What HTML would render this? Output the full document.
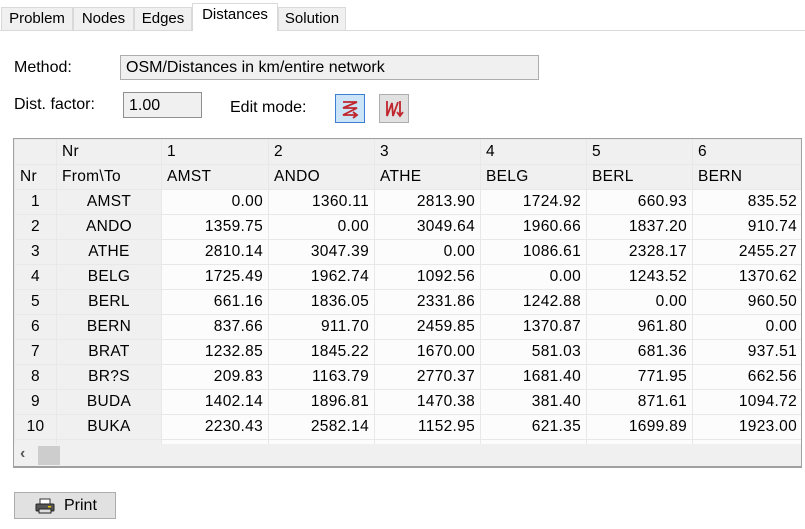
<!DOCTYPE html>
<html><head><style>
body{margin:0;width:805px;height:529px;background:#fff;font-family:"Liberation Sans",sans-serif;font-size:16px;color:#000;position:relative;overflow:hidden}
.abs{position:absolute}
.tab{position:absolute;top:7px;height:23px;background:#f0f0f0;border:1px solid #d9d9d9;border-bottom:none;line-height:22px;text-align:center;box-sizing:border-box;font-size:15px}
table{border-collapse:collapse;table-layout:fixed}
td{height:25px;border:1px solid #e8e8e8;padding:0 5px;box-sizing:border-box;white-space:nowrap;overflow:hidden;font-size:15.5px;letter-spacing:0.3px}
td.g{background:#f0f0f0}
td.c{text-align:center}
td.n{text-align:right;background:#fcfcfc}
</style></head><body>
<div class="abs" style="left:0;top:30px;width:805px;border-top:1px solid #d9d9d9"></div>
<div class="tab" style="left:1px;width:72px">Problem</div>
<div class="tab" style="left:73px;width:61px">Nodes</div>
<div class="tab" style="left:134px;width:58px">Edges</div>
<div class="tab" style="left:192px;top:3px;height:28px;width:86px;background:#fff;border-color:#d9d9d9">Distances</div>
<div class="tab" style="left:278px;width:68px">Solution</div>

<div class="abs" style="left:14px;top:59px">Method:</div>
<div class="abs" style="left:120px;top:55px;width:419px;height:25px;box-sizing:border-box;border:1px solid #adadad;background:#f0f0f0;padding:3px 5px">OSM/Distances in km/entire network</div>
<div class="abs" style="left:14px;top:96px">Dist. factor:</div>
<div class="abs" style="left:123px;top:92px;width:79px;height:26px;box-sizing:border-box;border:1px solid #8f8f8f;background:#f0f0f0;padding:4px 5px">1.00</div>
<div class="abs" style="left:230px;top:99px">Edit mode:</div>
<div class="abs" style="left:335px;top:94px;width:30px;height:29px;box-sizing:border-box;border:1px solid #3c7fd0;background:#cce4f7">
<svg width="28" height="27" viewBox="0 0 28 27"><path d="M7 7H21L7 13H21L7 20H20M17 17L21 20L17 23" fill="none" stroke="#c0262c" stroke-width="1.8"/></svg></div>
<div class="abs" style="left:379px;top:94px;width:30px;height:29px;box-sizing:border-box;border:1px solid #adadad;background:#e1e1e1">
<svg width="28" height="27" viewBox="0 0 28 27"><path d="M7 6L7 21L12 8L13 21L18 7M20 6V21M17 17L20 21L23 17" fill="none" stroke="#c0262c" stroke-width="1.8"/></svg></div>

<div class="abs" style="left:13px;top:138px;width:789px;height:330px;box-sizing:border-box;border:1px solid #a0a0a0;border-bottom:2px solid #a0a0a0;background:#f0f0f0;overflow:hidden">
<table style="position:absolute;left:0;top:0;width:788px">
<colgroup><col style="width:42px"><col style="width:105px"><col style="width:107px"><col style="width:106px"><col style="width:106px"><col style="width:106px"><col style="width:106px"><col style="width:110px"></colgroup>
<tr><td class="g"></td><td class="g">Nr</td><td class="g">1</td><td class="g">2</td><td class="g">3</td><td class="g">4</td><td class="g">5</td><td class="g">6</td></tr>
<tr><td class="g">Nr</td><td class="g">From\To</td><td class="g">AMST</td><td class="g">ANDO</td><td class="g">ATHE</td><td class="g">BELG</td><td class="g">BERL</td><td class="g">BERN</td></tr>
<tr><td class="g c">1</td><td class="g c">AMST</td><td class="n">0.00</td><td class="n">1360.11</td><td class="n">2813.90</td><td class="n">1724.92</td><td class="n">660.93</td><td class="n">835.52</td></tr>
<tr><td class="g c">2</td><td class="g c">ANDO</td><td class="n">1359.75</td><td class="n">0.00</td><td class="n">3049.64</td><td class="n">1960.66</td><td class="n">1837.20</td><td class="n">910.74</td></tr>
<tr><td class="g c">3</td><td class="g c">ATHE</td><td class="n">2810.14</td><td class="n">3047.39</td><td class="n">0.00</td><td class="n">1086.61</td><td class="n">2328.17</td><td class="n">2455.27</td></tr>
<tr><td class="g c">4</td><td class="g c">BELG</td><td class="n">1725.49</td><td class="n">1962.74</td><td class="n">1092.56</td><td class="n">0.00</td><td class="n">1243.52</td><td class="n">1370.62</td></tr>
<tr><td class="g c">5</td><td class="g c">BERL</td><td class="n">661.16</td><td class="n">1836.05</td><td class="n">2331.86</td><td class="n">1242.88</td><td class="n">0.00</td><td class="n">960.50</td></tr>
<tr><td class="g c">6</td><td class="g c">BERN</td><td class="n">837.66</td><td class="n">911.70</td><td class="n">2459.85</td><td class="n">1370.87</td><td class="n">961.80</td><td class="n">0.00</td></tr>
<tr><td class="g c">7</td><td class="g c">BRAT</td><td class="n">1232.85</td><td class="n">1845.22</td><td class="n">1670.00</td><td class="n">581.03</td><td class="n">681.36</td><td class="n">937.51</td></tr>
<tr><td class="g c">8</td><td class="g c">BR?S</td><td class="n">209.83</td><td class="n">1163.79</td><td class="n">2770.37</td><td class="n">1681.40</td><td class="n">771.95</td><td class="n">662.56</td></tr>
<tr><td class="g c">9</td><td class="g c">BUDA</td><td class="n">1402.14</td><td class="n">1896.81</td><td class="n">1470.38</td><td class="n">381.40</td><td class="n">871.61</td><td class="n">1094.72</td></tr>
<tr><td class="g c">10</td><td class="g c">BUKA</td><td class="n">2230.43</td><td class="n">2582.14</td><td class="n">1152.95</td><td class="n">621.35</td><td class="n">1699.89</td><td class="n">1923.00</td></tr>
<tr><td class="g c"></td><td class="g c"></td><td class="n"></td><td class="n"></td><td class="n"></td><td class="n"></td><td class="n"></td><td class="n"></td></tr>
</table>
<div class="abs" style="left:0;top:305px;width:788px;height:23px;background:#f0f0f0"></div>
<div class="abs" style="left:6px;top:306px;font-size:16px;font-weight:bold;color:#555">&lsaquo;</div>
<div class="abs" style="left:24px;top:307px;width:22px;height:19px;background:#cdcdcd"></div>
</div>

<div class="abs" style="left:14px;top:492px;width:102px;height:27px;box-sizing:border-box;border:1px solid #adadad;background:#e1e1e1">
<svg class="abs" style="left:20px;top:5px" width="20" height="16" viewBox="0 0 20 16"><rect x="5" y="1" width="10" height="5" fill="#fff" stroke="#333"/><rect x="1" y="6" width="18" height="7" rx="1" fill="#555" stroke="#222"/><rect x="4" y="11" width="12" height="4" fill="#ddd" stroke="#222"/><rect x="13" y="8" width="3" height="1.5" fill="#e8c200"/></svg>
<span class="abs" style="left:49px;top:4px">Print</span></div>
</body></html>
